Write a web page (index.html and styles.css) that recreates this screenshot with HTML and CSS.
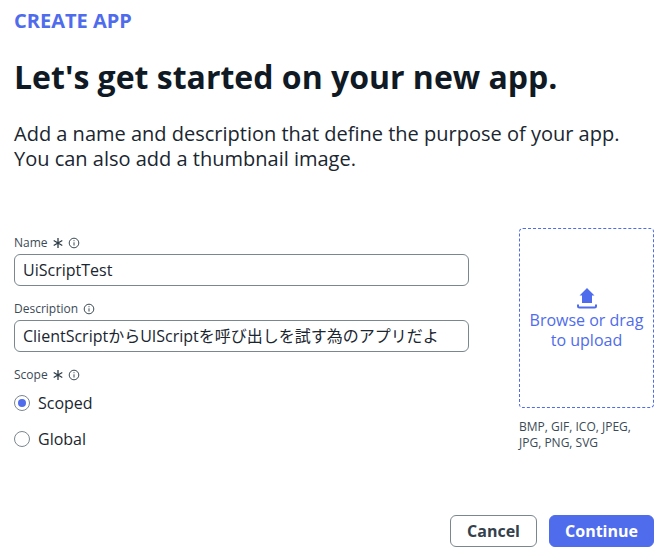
FILE: index.html
```
<!DOCTYPE html>
<html lang="en">
<head>
<meta charset="utf-8">
<title>Create App</title>
<link rel="stylesheet" href="styles.css">
</head>
<body>
<main class="page">
  <div class="eyebrow">CREATE APP</div>
  <h1 class="title">Let's get started on your new app.</h1>
  <p class="intro">Add a name and description that define the purpose of your app.<br>You can also add a thumbnail image.</p>
  <div class="columns">
    <form class="form">
      <div class="field">
        <div class="label">Name <svg class="star" viewBox="0 0 10 10"><path d="M5 0v10M.7 2.500l8.600 5M9.300 2.500l-8.600 5"/></svg> <svg class="info" viewBox="0 0 12 12"><circle cx="6" cy="6" r="4.800"/><path d="M6 5.300v3.200M6 3.200v1"/></svg></div>
        <div class="input">UiScriptTest</div>
      </div>
      <div class="field">
        <div class="label">Description <svg class="info" viewBox="0 0 12 12"><circle cx="6" cy="6" r="4.800"/><path d="M6 5.300v3.200M6 3.200v1"/></svg></div>
        <div class="input">ClientScriptからUIScriptを呼び出しを試す為のアプリだよ</div>
      </div>
      <div class="field">
        <div class="label">Scope <svg class="star" viewBox="0 0 10 10"><path d="M5 0v10M.7 2.500l8.600 5M9.300 2.500l-8.600 5"/></svg> <svg class="info" viewBox="0 0 12 12"><circle cx="6" cy="6" r="4.800"/><path d="M6 5.300v3.200M6 3.200v1"/></svg></div>
        <div class="radios">
          <div class="radio-row"><span class="radio radio-on"></span>Scoped</div>
          <div class="radio-row"><span class="radio"></span>Global</div>
        </div>
      </div>
    </form>
    <aside class="side">
      <div class="drop">
        <svg class="upload" viewBox="0 0 20 22"><path class="fill" d="M10 0l7.500 7.500H15V15H5V7.500H2.500z"/><path class="line" d="M1 16.500v1.500a1.500 1.500 0 0 0 1.500 1.500h15A1.500 1.500 0 0 0 19 18v-1.500"/></svg>
        <div class="drop-text">Browse or drag<br>to upload</div>
      </div>
      <div class="types">BMP, GIF, ICO, JPEG,<br>JPG, PNG, SVG</div>
    </aside>
  </div>
  <div class="actions">
    <button class="btn btn-cancel" type="button">Cancel</button>
    <button class="btn btn-primary" type="button">Continue</button>
  </div>
</main>
</body>
</html>
```
FILE: styles.css
```
* { box-sizing: border-box; }
html, body { margin: 0; padding: 0; }
body {
  width: 665px; height: 557px; overflow: hidden; background: #fff; color: #14202b;
  font-family: "Open Sans", "Noto Sans CJK JP", sans-serif;
}
.page { padding: 10px 11px 0 14px; }
.eyebrow { font-size: 20px; line-height: 22px; font-weight: 700; color: #4f6cec; }
.title { margin: 21px 0 0; font-size: 32px; line-height: 48px; font-weight: 700; color: #101a24; }
.intro { margin: 20px 0 0; font-size: 20px; line-height: 25px; color: #1a2630; }
.columns { display: flex; justify-content: space-between; margin-top: 57px; height: 252px; }
.form { width: 455px; padding-top: 7px; }
.field { margin-bottom: 15px; }
.label { font-size: 12px; line-height: 16px; color: #3b4a56; display: flex; align-items: center; gap: 4px; margin-bottom: 3px; }
.star { width: 10px; height: 10px; fill: none; stroke: #2e3c48; stroke-width: 1.300; margin-left: 1px; }
.info { width: 12px; height: 12px; fill: none; stroke: #3b4a56; stroke-width: 1; margin-left: 1px; }
.input {
  height: 32px; border: 1px solid #7a878f; border-radius: 6px; padding: 0 8px;
  font-size: 16px; line-height: 30px; color: #1a2630; white-space: nowrap; overflow: hidden;
}
.radios { display: flex; flex-direction: column; gap: 14px; margin-top: 9px; }
.radio-row { display: flex; align-items: center; gap: 8px; font-size: 16px; line-height: 22px; color: #1a2630; }
.radio { width: 16px; height: 16px; border: 1px solid #7a878f; border-radius: 50%; display: flex; align-items: center; justify-content: center; }
.radio-on::after { content: ""; width: 8px; height: 8px; border-radius: 50%; background: #4f6cec; }
.side { width: 135px; }
.drop {
  height: 180px; border: 1px dashed #4f6cec; border-radius: 4px; color: #4f6cec;
  display: flex; flex-direction: column; align-items: center; justify-content: center; padding-top: 2px;
}
.upload { width: 20px; height: 22px; }
.upload .fill { fill: #4f6cec; }
.upload .line { fill: none; stroke: #4f6cec; stroke-width: 2; }
.drop-text { font-size: 16px; line-height: 20px; text-align: center; }
.types { margin-top: 11px; font-size: 12px; line-height: 15.500px; color: #3b4a56; }
.actions { display: flex; justify-content: flex-end; gap: 12px; margin-top: 35px; }
.btn { height: 32px; border-radius: 6px; font-family: inherit; font-size: 16px; font-weight: 700; padding: 0; }
.btn-cancel { width: 87px; background: #fff; border: 1px solid #7a878f; color: #33414c; }
.btn-primary { width: 105px; background: #4f6cec; border: 1px solid #4f6cec; color: #fff; }
```
